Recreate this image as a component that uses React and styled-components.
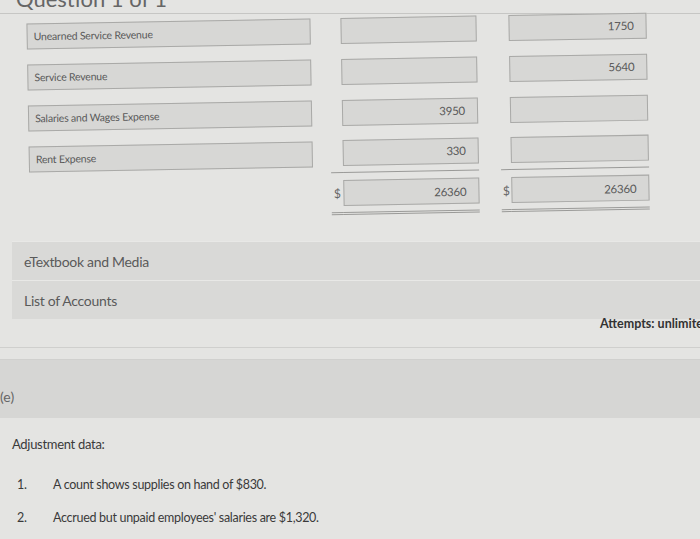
import React from "react";
import styled, { createGlobalStyle } from "styled-components";

const GlobalStyle = createGlobalStyle`
  html, body {
    margin: 0;
    padding: 0;
    background: #e3e3e1;
  }
  body {
    font-family: Lato, "Open Sans", "Liberation Sans", sans-serif;
    overflow: hidden;
  }
`;

const Page = styled.div`
  width: 700px;
  height: 539px;
  overflow: hidden;
  background: #e4e4e2;
`;

const Header = styled.div`
  height: 13px;
  overflow: hidden;
  border-bottom: 1px solid #c6c6c4;
`;

const HeaderTitle = styled.div`
  margin-top: -14px;
  padding-left: 16px;
  font-size: 22px;
  line-height: 26px;
  color: #666;
`;

const Ledger = styled.div`
  display: grid;
  grid-template-columns: 284px 18px 12px 136px 22px 10px 138px;
  grid-auto-rows: 41px;
  padding-left: 28px;
  margin-top: -4px;
  transform: rotate(-1deg);
  transform-origin: 340px 100px;
`;

const Cell = styled.div`
  display: flex;
  align-items: center;
  ${(p) => p.$line === "single" && `border-bottom: 1px solid #9a9a98; margin-bottom: 1px;`}
  ${(p) => p.$line === "double" && `border-bottom: 3px double #9a9a98;`}
`;

const Box = styled.div`
  box-sizing: border-box;
  width: 100%;
  height: 26px;
  border: 1px solid #a9a9a7;
  background: #d7d7d5;
  display: flex;
  align-items: center;
  justify-content: ${(p) => (p.$right ? "flex-end" : "flex-start")};
  padding: 0 ${(p) => (p.$right ? "12px" : "6px")};
  font-size: ${(p) => (p.$right ? "11.5px" : "10.5px")};
  color: #595959;
  letter-spacing: -0.2px;
`;

const Dollar = styled.div`
  font-size: 12px;
  color: #666;
  width: 100%;
  text-align: center;
`;

const Spacer = styled.div``;

const Resources = styled.div`
  margin-top: 26px;
`;

const Band = styled.div`
  margin-left: 12px;
  height: 38px;
  background: #d9d9d7;
  border-top: 1px solid #e8e8e6;
  display: flex;
  align-items: center;
  padding-left: 12px;
  font-size: 14px;
  color: #5a5a5a;
  letter-spacing: -0.3px;
`;

const AttemptsRow = styled.div`
  display: flex;
  justify-content: flex-end;
  align-items: flex-start;
  height: 28px;
  border-bottom: 1px solid #cfcfcd;
`;

const Attempts = styled.span`
  font-size: 12.5px;
  line-height: 14px;
  font-weight: bold;
  color: #333;
  margin-right: -10px;
  margin-top: -2px;
  white-space: nowrap;
`;

const Gap = styled.div`
  height: 11px;
  border-bottom: 1px solid #d0d0ce;
`;

const PartBar = styled.div`
  height: 58px;
  background: #d6d6d4;
  display: flex;
  align-items: flex-end;
  padding-bottom: 13px;
  box-sizing: border-box;
  font-size: 14px;
  color: #666;
`;

const Body = styled.div`
  padding: 18px 12px 0;
`;

const Intro = styled.p`
  margin: 0 0 16px;
  font-size: 13px;
  color: #3a3a3a;
  letter-spacing: -0.3px;
`;

const List = styled.ol`
  margin: 0;
  padding: 0;
  list-style: none;
`;

const Item = styled.li`
  display: flex;
  height: 33px;
  align-items: center;
  font-size: 12.5px;
  color: #3a3a3a;
  letter-spacing: -0.3px;
`;

const Num = styled.span`
  width: 41px;
  padding-left: 5px;
  box-sizing: border-box;
`;

const rows = [
  { account: "Unearned Service Revenue", debit: "", credit: "1750" },
  { account: "Service Revenue", debit: "", credit: "5640" },
  { account: "Salaries and Wages Expense", debit: "3950", credit: "" },
  { account: "Rent Expense", debit: "330", credit: "", line: "single" },
];

export default function App() {
  return (
    <Page>
      <GlobalStyle />
      <Header>
        <HeaderTitle>Question 1 of 1</HeaderTitle>
      </Header>

      <Ledger>
        {rows.map((r) => (
          <React.Fragment key={r.account}>
            <Cell>
              <Box>{r.account}</Box>
            </Cell>
            <Spacer />
            <Cell $line={r.line} />
            <Cell $line={r.line}>
              <Box $right>{r.debit}</Box>
            </Cell>
            <Spacer />
            <Cell $line={r.line} />
            <Cell $line={r.line}>
              <Box $right>{r.credit}</Box>
            </Cell>
          </React.Fragment>
        ))}
        <Spacer />
        <Spacer />
        <Cell $line="double">
          <Dollar>$</Dollar>
        </Cell>
        <Cell $line="double">
          <Box $right>26360</Box>
        </Cell>
        <Spacer />
        <Cell $line="double">
          <Dollar>$</Dollar>
        </Cell>
        <Cell $line="double">
          <Box $right>26360</Box>
        </Cell>
      </Ledger>

      <Resources>
        <Band>eTextbook and Media</Band>
        <Band>List of Accounts</Band>
      </Resources>

      <AttemptsRow>
        <Attempts>Attempts: unlimited</Attempts>
      </AttemptsRow>
      <Gap />

      <PartBar>(e)</PartBar>

      <Body>
        <Intro>Adjustment data:</Intro>
        <List>
          <Item>
            <Num>1.</Num>A count shows supplies on hand of $830.
          </Item>
          <Item>
            <Num>2.</Num>Accrued but unpaid employees' salaries are $1,320.
          </Item>
        </List>
      </Body>
    </Page>
  );
}
